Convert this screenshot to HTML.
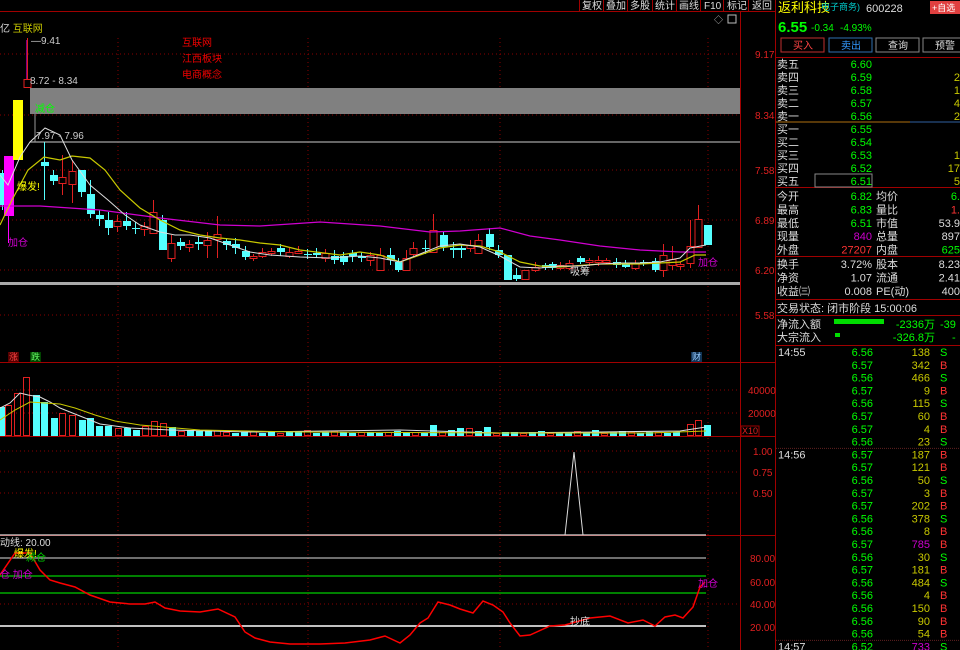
<!DOCTYPE html>
<html><head><meta charset="utf-8"><style>
body{margin:0;background:#000;width:960px;height:650px;overflow:hidden;font-family:"Liberation Sans","Noto Sans CJK SC",sans-serif}
svg{position:absolute;left:0;top:0}
text{font-family:"Liberation Sans","Noto Sans CJK SC",sans-serif}
</style></head><body>
<svg id="s" width="960" height="650" viewBox="0 0 960 650">
<rect width="960" height="650" fill="#000"/>
<g stroke="#8a0000" stroke-dasharray="1,3" stroke-width="1">
<line x1="0" y1="54" x2="740" y2="54"/><line x1="0" y1="115" x2="740" y2="115"/><line x1="0" y1="170" x2="740" y2="170"/><line x1="0" y1="220" x2="740" y2="220"/><line x1="0" y1="270" x2="740" y2="270"/><line x1="0" y1="315" x2="740" y2="315"/>
<line x1="118" y1="38" x2="118" y2="650"/><line x1="308" y1="38" x2="308" y2="650"/><line x1="500" y1="38" x2="500" y2="650"/><line x1="708" y1="38" x2="708" y2="650"/>
<line x1="0" y1="390" x2="740" y2="390"/><line x1="0" y1="413" x2="740" y2="413"/>
<line x1="0" y1="451" x2="740" y2="451"/><line x1="0" y1="472" x2="740" y2="472"/><line x1="0" y1="493" x2="740" y2="493"/>
<line x1="0" y1="604" x2="740" y2="604"/>
</g>
<g stroke="#a00000" stroke-width="1">
<line x1="0" y1="11.5" x2="775" y2="11.5"/>
<line x1="0" y1="362.5" x2="740" y2="362.5"/>
<line x1="0" y1="436.5" x2="775" y2="436.5"/>
<line x1="0" y1="535.5" x2="775" y2="535.5"/>
<line x1="740.5" y1="11" x2="740.5" y2="650"/>
<line x1="775.5" y1="0" x2="775.5" y2="650"/>
<line x1="740" y1="362.5" x2="775" y2="362.5"/>
</g>
<g font-size="10" fill="#ddd" stroke="none">
<g stroke="#a00000" fill="none"><line x1="579.5" y1="0" x2="579.5" y2="11"/><line x1="603.5" y1="0" x2="603.5" y2="11"/><line x1="627.5" y1="0" x2="627.5" y2="11"/><line x1="652.5" y1="0" x2="652.5" y2="11"/><line x1="676.5" y1="0" x2="676.5" y2="11"/><line x1="700.5" y1="0" x2="700.5" y2="11"/><line x1="723.5" y1="0" x2="723.5" y2="11"/><line x1="748.5" y1="0" x2="748.5" y2="11"/></g>
<text x="582" y="9">复权</text><text x="606" y="9">叠加</text><text x="630" y="9">多股</text><text x="655" y="9">统计</text><text x="679" y="9">画线</text><text x="704" y="9">F10</text><text x="727" y="9">标记</text><text x="752" y="9">返回</text>
</g>
<text x="714" y="23" font-size="9" fill="#bbb">◇</text><rect x="728" y="15" width="8" height="8" fill="none" stroke="#bbb"/>
<g font-size="10" fill="#e02020">
<text x="755" y="58">9.17</text><text x="755" y="119">8.34</text><text x="755" y="174">7.58</text><text x="755" y="224">6.89</text><text x="755" y="274">6.20</text><text x="755" y="319">5.58</text>
<text x="748" y="394">40000</text><text x="748" y="417">20000</text>
<text x="753" y="455">1.00</text><text x="753" y="476">0.75</text><text x="753" y="497">0.50</text>
<text x="750" y="562">80.00</text><text x="750" y="586">60.00</text><text x="750" y="608">40.00</text><text x="750" y="631">20.00</text>
</g>
<rect x="741" y="426" width="18" height="10" fill="none" stroke="#a00000"/><text x="742" y="434" font-size="9" fill="#e02020">X10</text>
<rect x="30" y="88" width="710" height="26" fill="#808080"/>
<line x1="30" y1="142" x2="740" y2="142" stroke="#888" stroke-width="1.5"/>
<rect x="0" y="282" width="740" height="3" fill="#aaa"/>
<line x1="35" y1="114" x2="35" y2="142" stroke="#999"/>
<line x1="27" y1="40" x2="27" y2="79" stroke="#f0f"/>
<g id="candles"></g>
<g id="vol"></g>
<polyline fill="none" stroke="#d000d0" stroke-width="1.2" points="0,206 40,206 100,210 160,218 220,225 260,226 320,222 380,226 430,232 460,231 500,228 530,236 560,240 600,246 640,250 680,252 706,252"/>
<polyline fill="none" stroke="#c8c800" stroke-width="1.2" points="0,225 12,200 28,170 44,157 60,160 72,156 90,158 105,170 120,190 140,208 160,220 180,230 200,235 220,238 240,240 260,243 280,245 300,250 340,255 360,252 380,255 400,262 420,255 440,248 460,245 480,246 500,252 520,262 540,266 560,267 600,264 640,264 660,263 680,262 695,255 706,255"/>
<polyline fill="none" stroke="#ddd" stroke-width="1" points="0,175 8,185 20,157 30,142 45,128 60,135 72,160 90,185 108,200 125,215 140,225 160,232 175,235 190,235 210,238 230,245 250,252 270,255 300,257 330,258 360,256 380,258 400,262 420,254 440,246 460,244 480,247 500,256 520,267 540,268 560,266 580,266 600,264 620,263 640,263 660,262 680,258 690,248 706,245"/>
<g font-size="10">
<text x="0" y="32" fill="#ddd">亿 <tspan fill="#c8c800">互联网</tspan></text>
<text x="31" y="44" fill="#ccc">—9.41</text>
<text x="30" y="84" fill="#ccc">8.72 - 8.34</text>
<text x="36" y="139" fill="#ccc">7.97 - 7.96</text>
<text x="35" y="112" fill="#0f0">减仓</text>
<text x="182" y="46" fill="#e00">互联网</text><text x="182" y="62" fill="#e00">江西板块</text><text x="182" y="78" fill="#e00">电商概念</text>
<text x="17" y="190" fill="#ff0">爆发!</text>
<text x="8" y="246" fill="#d000d0">加仓</text>
<text x="570" y="275" fill="#ddd">吸筹</text>
<text x="698" y="266" fill="#d000d0">加仓</text>
<rect x="8" y="352" width="11" height="10" fill="#500"/><text x="9" y="360" fill="#f44" font-size="9">涨</text>
<rect x="30" y="352" width="11" height="10" fill="#040"/><text x="31" y="360" fill="#6f6" font-size="9">跌</text>
<rect x="691" y="352" width="11" height="10" fill="#135"/><text x="692" y="360" fill="#9cf" font-size="9">财</text>
</g>
<line x1="0" y1="535" x2="706" y2="535" stroke="#ddd" stroke-width="1.2"/>
<polyline fill="none" stroke="#ddd" stroke-width="1" points="565,535 574,452 583,535"/>
<line x1="0" y1="558" x2="706" y2="558" stroke="#ddd"/>
<line x1="0" y1="576" x2="706" y2="576" stroke="#0a0" stroke-width="1.5"/>
<line x1="0" y1="593" x2="706" y2="593" stroke="#0a0" stroke-width="1.5"/>
<line x1="0" y1="626" x2="706" y2="626" stroke="#fff" stroke-width="1.5"/>
<polyline fill="none" stroke="#f00" stroke-width="1.5" points="0,575 15,553 30,553 40,570 50,580 60,583 75,587 90,595 110,602 130,604 145,604 155,602 165,608 180,611 200,612 218,609 235,617 245,632 255,638 270,642 290,644 320,644 345,643 370,640 385,636 400,643 410,635 420,623 428,618 438,602 450,605 460,609 473,613 483,601 493,605 503,612 510,623 520,636 530,635 550,626 565,625 590,618 610,616 628,623 643,620 655,626 665,617 675,615 683,618 693,607 700,587 705,582"/>
<g font-size="10">
<text x="0" y="546" fill="#ddd">动线: 20.00</text>
<text x="14" y="557" fill="#ff0">爆发!</text><text x="26" y="561" fill="#0c0">减仓</text>
<text x="0" y="578" fill="#d000d0">仓 加仓</text>
<text x="570" y="625" fill="#ddd">抄底</text>
<text x="698" y="587" fill="#d000d0">加仓</text>
</g>
<g font-size="12">
<text x="778" y="12" fill="#ff0" font-size="13">返利科技</text><text x="821" y="10" fill="#0cc" font-size="9">电子商务)</text><text x="866" y="12" fill="#ddd" font-size="11">600228</text>
<rect x="930" y="1" width="30" height="13" fill="#e04040"/><text x="932" y="11" fill="#fff" font-size="9">+自选</text>
<text x="778" y="32" fill="#0f0" font-size="15" font-weight="bold">6.55</text><text x="811" y="31" fill="#0f0" font-size="10">-0.34</text><text x="840" y="31" fill="#0f0" font-size="10">-4.93%</text>
<rect x="781" y="38" width="43" height="14" fill="none" stroke="#c03030"/><text x="793" y="49" fill="#f44" font-size="10">买入</text>
<rect x="829" y="38" width="43" height="14" fill="none" stroke="#3070b0"/><text x="841" y="49" fill="#39f" font-size="10">卖出</text>
<rect x="876" y="38" width="43" height="14" fill="none" stroke="#888"/><text x="888" y="49" fill="#ddd" font-size="10">查询</text>
<rect x="923" y="38" width="40" height="14" fill="none" stroke="#888"/><text x="935" y="49" fill="#ddd" font-size="10">预警</text>
<line x1="776" y1="57.5" x2="960" y2="57.5" stroke="#a00000"/>
<line x1="776" y1="122" x2="910" y2="122" stroke="#b07010"/><line x1="910" y1="122" x2="960" y2="122" stroke="#3060a0"/>
<line x1="776" y1="187.5" x2="960" y2="187.5" stroke="#a00000"/>
<line x1="776" y1="256.5" x2="960" y2="256.5" stroke="#a00000"/>
<line x1="776" y1="299.5" x2="960" y2="299.5" stroke="#a00000"/>
<line x1="776" y1="315.5" x2="960" y2="315.5" stroke="#a00000"/>
<line x1="776" y1="345.5" x2="960" y2="345.5" stroke="#a00000"/>
<rect x="815" y="174" width="57" height="13" fill="none" stroke="#888"/>
<rect x="834" y="319" width="50" height="5" fill="#0d0"/><rect x="835" y="333" width="5" height="4" fill="#0d0"/>
</g>
<g id="rp" font-size="11"></g>
</svg>
<script>
var NS="http://www.w3.org/2000/svg";
function el(p,t,a,tx){var e=document.createElementNS(NS,t);for(var k in a)e.setAttribute(k,a[k]);if(tx!=null)e.textContent=tx;p.appendChild(e);return e;}
var g=document.getElementById('candles');
var C=[[2,173,205,170,210,'c'],[8,156,216,156,243,'m'],[17,100,160,100,160,'y'],[27,79,87,38,87,'r'],[44,162,166,142,200,'c'],[53,175,181,170,185,'c'],[62,177,183,155,195,'r'],[72,171,184,160,203,'r'],[81,170,192,170,197,'c'],[90,194,214,180,218,'c'],[99,215,219,210,226,'c'],[108,220,228,212,235,'c'],[117,221,226,215,232,'r'],[126,221,226,212,230,'c'],[135,228,229,222,234,'c'],[144,226,229,222,236,'r'],[153,212,233,200,233,'r'],[162,220,250,215,250,'c'],[171,243,258,235,262,'r'],[180,242,246,238,250,'c'],[189,244,247,240,252,'r'],[198,242,244,236,250,'c'],[207,240,245,232,258,'r'],[217,234,239,216,258,'r'],[226,241,245,238,250,'c'],[235,244,248,238,254,'c'],[245,251,257,246,260,'c'],[253,256,258,254,261,'r'],[262,252,256,248,258,'r'],[271,251,253,248,256,'r'],[280,248,252,244,256,'c'],[289,252,256,248,258,'r'],[298,251,253,246,254,'r'],[307,254,255,249,259,'c'],[316,253,255,248,258,'c'],[325,253,258,249,262,'r'],[334,256,260,250,264,'c'],[343,256,262,252,265,'c'],[352,253,256,250,262,'c'],[361,256,258,252,262,'c'],[370,255,260,252,266,'r'],[380,255,270,248,270,'r'],[390,255,260,248,265,'c'],[398,262,270,258,272,'c'],[406,258,270,250,270,'r'],[413,248,254,242,256,'r'],[425,248,249,240,254,'c'],[433,230,252,214,252,'r'],[443,235,247,232,251,'c'],[453,248,250,242,258,'c'],[461,248,250,244,258,'c'],[470,245,248,240,252,'r'],[478,240,253,234,253,'r'],[489,234,247,228,250,'c'],[498,250,255,245,258,'c'],[507,255,280,255,280,'c'],[516,275,279,268,281,'c'],[525,270,279,270,279,'r'],[535,267,270,262,272,'r'],[545,265,268,263,270,'c'],[552,264,268,262,270,'c'],[560,265,268,262,270,'r'],[569,263,268,260,270,'r'],[580,258,262,256,264,'c'],[589,260,262,258,266,'r'],[598,260,262,256,266,'r'],[606,260,262,258,264,'r'],[616,262,265,258,268,'c'],[625,264,267,260,268,'c'],[635,263,268,260,270,'r'],[643,262,264,260,266,'c'],[655,261,270,258,272,'c'],[663,255,270,244,277,'r'],[672,259,265,246,270,'r'],[680,264,266,262,270,'r'],[690,246,263,220,268,'r'],[698,219,247,205,247,'r'],[707,225,245,225,245,'c']];
var col={c:'#54ffff',r:'#e02020',m:'#ff00ff',y:'#ffff00'};
C.forEach(function(c){var w=c[5]=='m'||c[5]=='y'?9:7;var cl=col[c[5]];
el(g,'line',{x1:c[0]+.5,y1:c[3],x2:c[0]+.5,y2:c[4],stroke:cl});
var h=Math.max(1,c[2]-c[1]);
if(c[5]=='r')el(g,'rect',{x:c[0]-3,y:c[1]+.5,width:w,height:h,fill:'#000',stroke:cl});
else el(g,'rect',{x:c[0]-Math.floor(w/2),y:c[1],width:w+1,height:h,fill:cl});
});
var vg=document.getElementById('vol');
// x, top y, type
var V=[[1,407,'c'],[8,405,'r'],[17,393,'r'],[26,377,'r'],[36,395,'c'],[44,402,'c'],[54,418,'c'],[62,413,'r'],[72,415,'r'],[82,420,'c'],[90,418,'c'],[99,426,'c'],[108,426,'c'],[118,428,'r'],[127,428,'c'],[136,430,'c'],[145,426,'r'],[154,421,'r'],[163,423,'r'],[172,427,'c'],[181,431,'r'],[190,430,'c'],[199,431,'c'],[208,430,'c'],[217,430,'r']];
var seq=[432,433,432,431,433,432,433,431,432,430,433,432,431,432,433,432];
var i=0;for(var x=226;x<=680;x+=9){var t=seq[i%seq.length];var ty=(i%3==0)?'r':'c';
if(x>=428&&x<=440)t=425;if(x>=460&&x<=470)t=428;if(x>=485&&x<=495)t=427;
V.push([x,t,ty]);i++;}
V.push([690,424,'r'],[698,420,'r'],[707,425,'c']);
V.forEach(function(v){var ty=v[1];var h=436-ty;
if(v[2]=='r')el(vg,'rect',{x:v[0]-3+.5,y:ty+.5,width:6,height:h-1,fill:'none',stroke:'#e02020'});
else el(vg,'rect',{x:v[0]-3,y:ty,width:7,height:h,fill:'#54ffff'});});
el(vg,'polyline',{fill:'none',stroke:'#ddd',points:'0,408 10,403 20,393 28,395 40,397 50,402 60,408 80,416 100,424 130,428 170,430 250,432 400,430 500,433 600,432 680,431 706,427'});
el(vg,'polyline',{fill:'none',stroke:'#c8c800',points:'0,420 15,410 30,402 45,403 60,404 75,408 95,415 115,421 140,425 200,430 300,432 500,433 650,433 706,431'});
var rp=document.getElementById('rp');
function T(x,y,s,c,anchor){el(rp,'text',{x:x,y:y,fill:c,'text-anchor':anchor||'start'},s);}
var book=[['卖五','6.60',''],['卖四','6.59','2'],['卖三','6.58','1'],['卖二','6.57','4'],['卖一','6.56','2']];
book.forEach(function(b,i){var y=68+i*13;T(777,y,b[0],'#ddd');T(872,y,b[1],'#0f0','end');T(960,y,b[2],'#c8c800','end');});
var buy=[['买一','6.55',''],['买二','6.54',''],['买三','6.53','1'],['买四','6.52','17'],['买五','6.51','5']];
buy.forEach(function(b,i){var y=133+i*13;T(777,y,b[0],'#ddd');T(872,y,b[1],'#0f0','end');T(960,y,b[2],'#c8c800','end');});
var st=[['今开','6.82','#0f0','均价','6.','#0f0'],['最高','6.83','#0f0','量比','1.','#f33'],['最低','6.51','#0f0','市值','53.9','#ddd'],['现量','840','#c0c','总量','897','#ddd'],['外盘','27207','#f33','内盘','625','#0f0']];
st.forEach(function(s,i){var y=200+i*13.4;T(777,y,s[0],'#ddd');T(872,y,s[1],s[2],'end');T(876,y,s[3],'#ddd');T(960,y,s[4],s[5],'end');});
var st2=[['换手','3.72%','股本','8.23'],['净资','1.07','流通','2.41'],['收益㈢','0.008','PE(动)','400']];
st2.forEach(function(s,i){var y=268+i*13.4;T(777,y,s[0],'#ddd');T(872,y,s[1],'#ddd','end');T(876,y,s[2],'#ddd');T(960,y,s[3],'#ddd','end');});
T(777,312,'交易状态: 闭市阶段 15:00:06','#ddd');
T(777,328,'净流入额','#ddd');T(935,328,'-2336万','#0f0','end');T(940,328,'-39','#0f0');
T(777,341,'大宗流入','#ddd');T(935,341,'-326.8万','#0f0','end');T(952,341,'-','#0f0');
var ticks=[['14:55','6.56','138','S'],['','6.57','342','B'],['','6.56','466','S'],['','6.57','9','B'],['','6.56','115','S'],['','6.57','60','B'],['','6.57','4','B'],['','6.56','23','S'],['14:56','6.57','187','B'],['','6.57','121','B'],['','6.56','50','S'],['','6.57','3','B'],['','6.57','202','B'],['','6.56','378','S'],['','6.56','8','B'],['','6.57','785','B'],['','6.56','30','S'],['','6.57','181','B'],['','6.56','484','S'],['','6.56','4','B'],['','6.56','150','B'],['','6.56','90','B'],['','6.56','54','B'],['14:57','6.52','733','S']];
ticks.forEach(function(t,i){var y=356+i*12.8;if(t[0]){T(778,y,t[0],'#ddd');if(i>0)el(rp,'line',{x1:776,y1:y-10,x2:960,y2:y-10,stroke:'#602020','stroke-dasharray':'1,1'});}
T(873,y,t[1],'#0f0','end');T(930,y,t[2],(t[2]=='785'||t[2]=='733')?'#c0c':'#c8c800','end');T(940,y,t[3],t[3]=='S'?'#0f0':'#f33');});
</script>
</body></html>
